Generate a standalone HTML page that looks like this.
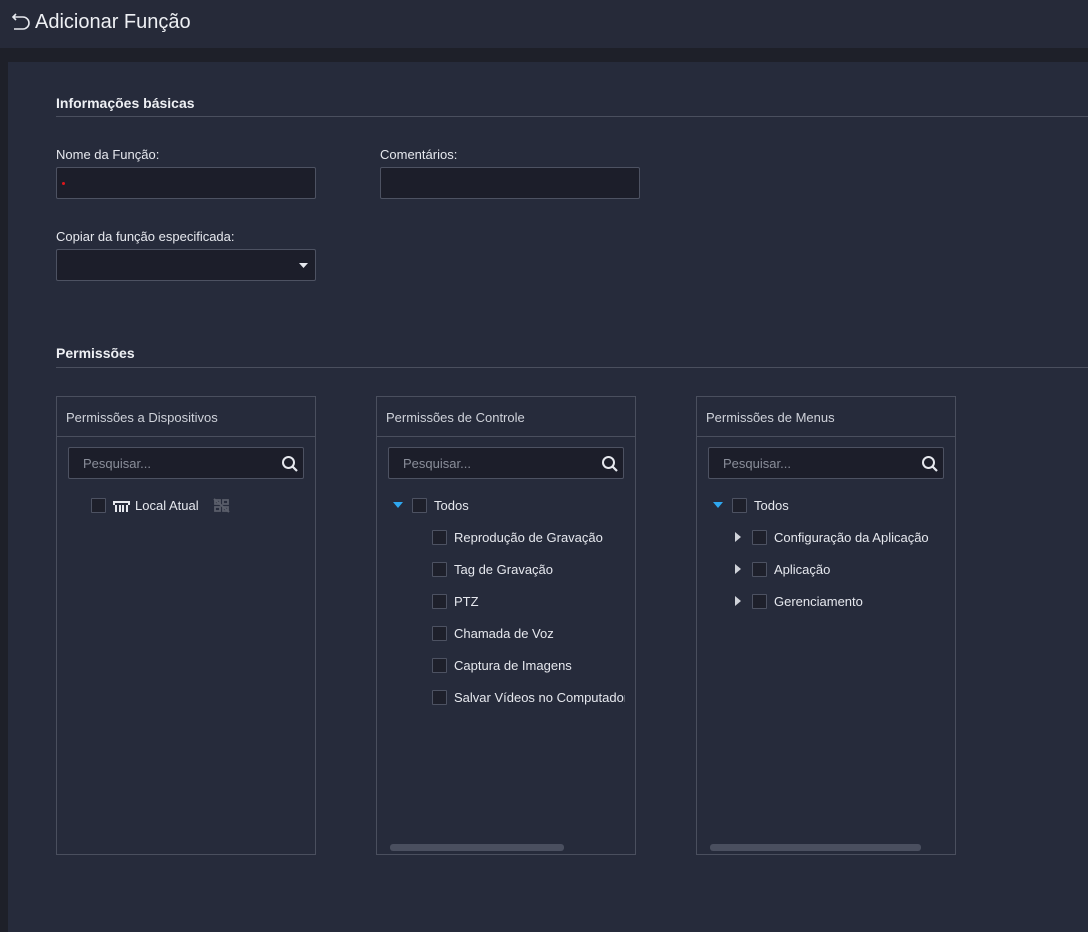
<!DOCTYPE html>
<html><head><meta charset="utf-8"><style>
*{box-sizing:border-box;margin:0;padding:0}
body{width:1088px;height:932px;background:#1e2029;font-family:"Liberation Sans",sans-serif;color:#e6e8ee;position:relative;overflow:hidden}
.hdr{position:absolute;left:0;top:0;width:1088px;height:48px;background:#262a39}
.title{position:absolute;left:35px;top:11px;font-size:20px;color:#eef0f4}
.content{position:absolute;left:8px;top:62px;width:1080px;height:870px;background:#262b3b}
.a{position:absolute}
.sec{font-size:14px;font-weight:bold;color:#eef0f4}
.line{height:1px;background:#4a4f5e}
.lbl{font-size:13px;color:#e6e8ee}
.inp{background:#1c1e2a;border:1px solid #4d5262;border-radius:2px}
.panel{border:1px solid #4a4f5e;width:260px;height:459px;top:396px}
.ph{position:absolute;left:0;top:0;width:258px;height:40px;border-bottom:1px solid #4a4f5e;font-size:13px;color:#cfd2da;padding:13px 9px}
.srch{position:absolute;left:11px;top:50px;width:236px;height:32px;background:#1c1e2a;border:1px solid #4d5262;border-radius:2px;font-size:13px;color:#8a8e9a;padding:8px 14px}
.srch svg{position:absolute;right:4px;top:7px}
.cb{position:absolute;width:15px;height:15px;border:1px solid #4d5262;background:#1e202b;border-radius:1px}
.t{position:absolute;font-size:13px;color:#e6e8ee;white-space:nowrap}
.sb{position:absolute;height:7px;background:#4a4f5f;border-radius:3px;top:447px}
</style></head><body>
<div class="hdr"></div>
<svg class="a" style="left:11px;top:12px" width="20" height="20" viewBox="0 0 20 20"><path d="M5 2 L2 5 L5 8 M2 5 H12 A6 6 0 0 1 12 17 H3" fill="none" stroke="#e6e8ee" stroke-width="1.6"/></svg>
<div class="title">Adicionar Função</div>
<div class="content"></div>
<div class="a sec" style="left:56px;top:95px">Informações básicas</div>
<div class="a line" style="left:56px;top:116px;width:1032px"></div>
<div class="a lbl" style="left:56px;top:147px">Nome da Função:</div>
<div class="a inp" style="left:56px;top:167px;width:260px;height:32px"></div>
<div class="a" style="left:62px;top:182px;width:3px;height:3px;background:#e0161c;border-radius:50%"></div>
<div class="a lbl" style="left:380px;top:147px">Comentários:</div>
<div class="a inp" style="left:380px;top:167px;width:260px;height:32px"></div>
<div class="a lbl" style="left:56px;top:229px">Copiar da função especificada:</div>
<div class="a inp" style="left:56px;top:249px;width:260px;height:32px"></div>
<svg class="a" style="left:299px;top:263px" width="10" height="5"><path d="M0 0H9L4.5 5Z" fill="#e6e8ee"/></svg>
<div class="a sec" style="left:56px;top:345px">Permissões</div>
<div class="a line" style="left:56px;top:367px;width:1032px"></div>

<div class="a panel" style="left:56px">
 <div class="ph">Permissões a Dispositivos</div>
 <div class="srch">Pesquisar...<svg width="18" height="18" viewBox="0 0 18 18"><circle cx="7.5" cy="7.5" r="5.5" fill="none" stroke="#e6e8ee" stroke-width="2"/><path d="M11.5 11.5L16 16" stroke="#e6e8ee" stroke-width="2.2"/></svg></div>
 <div class="cb" style="left:34px;top:101px"></div>
 <svg class="a" style="left:56px;top:102px" width="17" height="13" viewBox="0 0 17 13"><path d="M1 6V3H16V6" fill="none" stroke="#e6e8ee" stroke-width="2"/><path d="M3 6v7M7 6v7M10 6v7M14 6v7" stroke="#e6e8ee" stroke-width="2"/></svg>
 <div class="t" style="left:78px;top:101px">Local Atual</div>
 <svg class="a" style="left:156px;top:101px" width="17" height="15" viewBox="0 0 17 15"><path d="M2 2h5v4H2zM10 2h5v4h-5zM2 9h5v4H2zM10 9h5v4h-5z" fill="none" stroke="#5a5e6a" stroke-width="1.8"/><path d="M1 1L16 14" stroke="#5a5e6a" stroke-width="2"/></svg>
</div>

<div class="a panel" style="left:376px">
 <div class="ph">Permissões de Controle</div>
 <div class="srch">Pesquisar...<svg width="18" height="18" viewBox="0 0 18 18"><circle cx="7.5" cy="7.5" r="5.5" fill="none" stroke="#e6e8ee" stroke-width="2"/><path d="M11.5 11.5L16 16" stroke="#e6e8ee" stroke-width="2.2"/></svg></div>
 <svg class="a" style="left:16px;top:105px" width="10" height="6"><path d="M0 0H10L5 6Z" fill="#2ea7f0"/></svg>
 <div class="cb" style="left:35px;top:101px"></div>
 <div class="t" style="left:57px;top:101px">Todos</div>
 <div class="cb" style="left:55px;top:133px"></div><div class="t" style="left:77px;top:133px">Reprodução de Gravação</div>
 <div class="cb" style="left:55px;top:165px"></div><div class="t" style="left:77px;top:165px">Tag de Gravação</div>
 <div class="cb" style="left:55px;top:197px"></div><div class="t" style="left:77px;top:197px">PTZ</div>
 <div class="cb" style="left:55px;top:229px"></div><div class="t" style="left:77px;top:229px">Chamada de Voz</div>
 <div class="cb" style="left:55px;top:261px"></div><div class="t" style="left:77px;top:261px">Captura de Imagens</div>
 <div class="cb" style="left:55px;top:293px"></div><div class="t" style="left:77px;top:293px;width:171px;overflow:hidden">Salvar Vídeos no Computador</div>
 <div class="sb" style="left:13px;width:174px"></div>
</div>

<div class="a panel" style="left:696px">
 <div class="ph">Permissões de Menus</div>
 <div class="srch">Pesquisar...<svg width="18" height="18" viewBox="0 0 18 18"><circle cx="7.5" cy="7.5" r="5.5" fill="none" stroke="#e6e8ee" stroke-width="2"/><path d="M11.5 11.5L16 16" stroke="#e6e8ee" stroke-width="2.2"/></svg></div>
 <svg class="a" style="left:16px;top:105px" width="10" height="6"><path d="M0 0H10L5 6Z" fill="#2ea7f0"/></svg>
 <div class="cb" style="left:35px;top:101px"></div>
 <div class="t" style="left:57px;top:101px">Todos</div>
 <svg class="a" style="left:38px;top:135px" width="6" height="10"><path d="M0 0L6 5L0 10Z" fill="#d0d3da"/></svg>
 <div class="cb" style="left:55px;top:133px"></div><div class="t" style="left:77px;top:133px">Configuração da Aplicação</div>
 <svg class="a" style="left:38px;top:167px" width="6" height="10"><path d="M0 0L6 5L0 10Z" fill="#d0d3da"/></svg>
 <div class="cb" style="left:55px;top:165px"></div><div class="t" style="left:77px;top:165px">Aplicação</div>
 <svg class="a" style="left:38px;top:199px" width="6" height="10"><path d="M0 0L6 5L0 10Z" fill="#d0d3da"/></svg>
 <div class="cb" style="left:55px;top:197px"></div><div class="t" style="left:77px;top:197px">Gerenciamento</div>
 <div class="sb" style="left:13px;width:211px"></div>
</div>
</body></html>
